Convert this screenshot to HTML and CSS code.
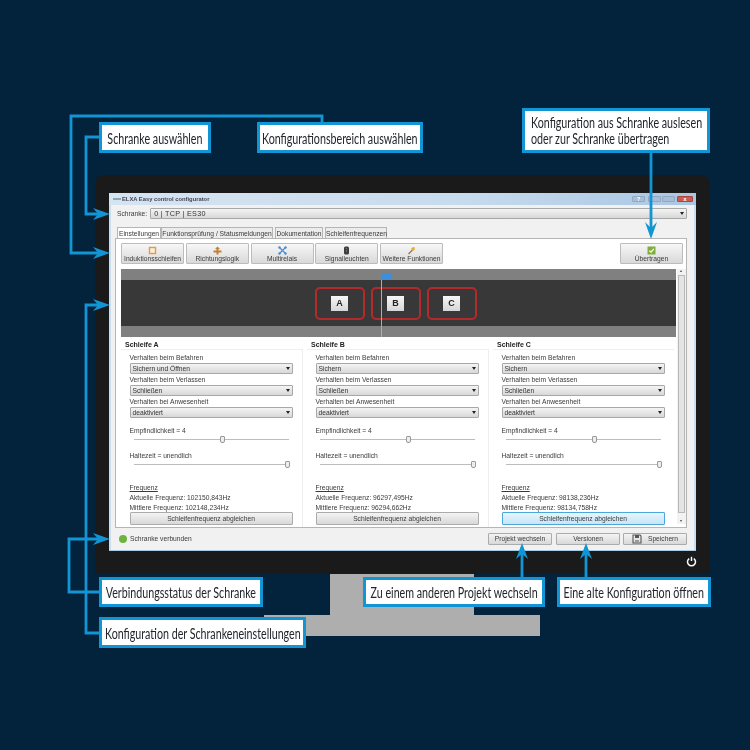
FILE: index.html
```html
<!DOCTYPE html>
<html lang="de">
<head>
    <meta charset="UTF-8">
    <meta name="viewport" content="width=device-width, initial-scale=1.0">
    <title>ELKA Easy control configurator</title>
    <link rel="stylesheet" href="styles.css">
</head>
<body>
<div class="stage">

    <!-- monitor with the application window -->
    <div class="stand"></div>
    <div class="stand-foot"></div>
    <div class="monitor">
        <div class="window">
            <div class="titlebar">
                <span class="app-icon"></span>
                <span class="app-title">ELXA Easy control configurator</span>
                <span class="win-btns">
                    <span class="win-btn win-help">?</span>
                    <span class="win-btn win-min"></span>
                    <span class="win-btn win-max"></span>
                    <span class="win-btn win-close">x</span>
                </span>
            </div>
            <div class="body">
                <div class="device-row">
                    <span>Schranke:</span>
                    <div class="select select-wide">0 | TCP | ES30</div>
                </div>
                <div class="tabs">
                    <span class="tab tab-active">Einstellungen</span>
                    <span class="tab tab-f">Funktionsprüfung / Statusmeldungen</span>
                    <span class="tab tab-d">Dokumentation</span>
                    <span class="tab tab-s">Schleifenfrequenzen</span>
                </div>
                <div class="panel">
                    <div class="toolbar">
                        <div class="tool">
                            <svg width="9" height="9" viewBox="0 0 9 9"><rect x="1.5" y="1.5" width="6" height="6" fill="#fbeeda" stroke="#e39a45" stroke-width="1.4"/></svg>
                            <span>Induktionsschleifen</span>
                        </div>
                        <div class="tool">
                            <svg width="9" height="9" viewBox="0 0 9 9"><path d="M4.5 0.5 7 3H5.5V4.5H8.5V6.5H5.5V8.5H3.5V6.5H0.5V4.5H3.5V3H2z" fill="#bb8238"/></svg>
                            <span>Richtungslogik</span>
                        </div>
                        <div class="tool">
                            <svg width="9" height="9" viewBox="0 0 9 9"><path d="M1 1 8 8M8 1 1 8" stroke="#4e8fd0" stroke-width="1.3"/><circle cx="1.5" cy="1.5" r="1.2" fill="#4e8fd0"/><circle cx="7.5" cy="1.5" r="1.2" fill="#4e8fd0"/><circle cx="1.5" cy="7.5" r="1.2" fill="#4e8fd0"/><circle cx="7.5" cy="7.5" r="1.2" fill="#4e8fd0"/></svg>
                            <span>Multirelais</span>
                        </div>
                        <div class="tool">
                            <svg width="9" height="9" viewBox="0 0 9 9"><rect x="2" y="0.5" width="5" height="8" rx="1.5" fill="#3d3d3d"/><circle cx="4.5" cy="2.5" r="0.8" fill="#777"/><circle cx="4.5" cy="5" r="0.8" fill="#777"/></svg>
                            <span>Signalleuchten</span>
                        </div>
                        <div class="tool">
                            <svg width="9" height="9" viewBox="0 0 9 9"><path d="M1.5 8 5.5 4" stroke="#8a7a4a" stroke-width="1.2"/><path d="M5 1.5 7.5 1 8 3.5 6 5 4 3z" fill="#e8b030"/></svg>
                            <span>Weitere Funktionen</span>
                        </div>
                        <div class="tool tool-send">
                            <svg width="9" height="9" viewBox="0 0 9 9"><rect x="0.5" y="0.5" width="8" height="8" fill="#7fae3c"/><path d="M2.3 4.6 4 6.2 6.8 2.8" fill="none" stroke="#fff" stroke-width="1.2"/></svg>
                            <span>Übertragen</span>
                        </div>
                    </div>
                    <div class="content">
                        <div class="content-main">
                            <div class="lane">
                                <div class="lane-road">
                                    <div class="loop"><span class="loop-key">A</span></div>
                                    <div class="loop"><span class="loop-key">B</span></div>
                                    <div class="loop"><span class="loop-key">C</span></div>
                                </div>
                                <span class="lane-line"></span>
                                <span class="lane-handle"></span>
                            </div>
                            <div class="loops">
                                <section class="group">
                                    <h3>Schleife A</h3>
                                    <div class="group-box">
                                        <p class="lbl">Verhalten beim Befahren</p>
                                        <div class="select">Sichern und Öffnen</div>
                                        <p class="lbl">Verhalten beim Verlassen</p>
                                        <div class="select">Schließen</div>
                                        <p class="lbl">Verhalten bei Anwesenheit</p>
                                        <div class="select">deaktiviert</div>
                                        <p class="lbl lbl-slider">Empfindlichkeit = 4</p>
                                        <div class="slider"><span class="knob knob-mid"></span></div>
                                        <p class="lbl lbl-slider lbl-slider-next">Haltezeit = unendlich</p>
                                        <div class="slider"><span class="knob knob-end"></span></div>
                                        <p class="lbl lbl-freq"><u>Frequenz</u></p>
                                        <p class="lbl lbl-tight">Aktuelle Frequenz: 102150,843Hz</p>
                                        <p class="lbl lbl-tight">Mittlere Frequenz: 102148,234Hz</p>
                                        <div class="btn">Schleifenfrequenz abgleichen</div>
                                    </div>
                                </section>
                                <section class="group">
                                    <h3>Schleife B</h3>
                                    <div class="group-box">
                                        <p class="lbl">Verhalten beim Befahren</p>
                                        <div class="select">Sichern</div>
                                        <p class="lbl">Verhalten beim Verlassen</p>
                                        <div class="select">Schließen</div>
                                        <p class="lbl">Verhalten bei Anwesenheit</p>
                                        <div class="select">deaktiviert</div>
                                        <p class="lbl lbl-slider">Empfindlichkeit = 4</p>
                                        <div class="slider"><span class="knob knob-mid"></span></div>
                                        <p class="lbl lbl-slider lbl-slider-next">Haltezeit = unendlich</p>
                                        <div class="slider"><span class="knob knob-end"></span></div>
                                        <p class="lbl lbl-freq"><u>Frequenz</u></p>
                                        <p class="lbl lbl-tight">Aktuelle Frequenz: 96297,495Hz</p>
                                        <p class="lbl lbl-tight">Mittlere Frequenz: 96294,662Hz</p>
                                        <div class="btn">Schleifenfrequenz abgleichen</div>
                                    </div>
                                </section>
                                <section class="group">
                                    <h3>Schleife C</h3>
                                    <div class="group-box">
                                        <p class="lbl">Verhalten beim Befahren</p>
                                        <div class="select">Sichern</div>
                                        <p class="lbl">Verhalten beim Verlassen</p>
                                        <div class="select">Schließen</div>
                                        <p class="lbl">Verhalten bei Anwesenheit</p>
                                        <div class="select">deaktiviert</div>
                                        <p class="lbl lbl-slider">Empfindlichkeit = 4</p>
                                        <div class="slider"><span class="knob knob-mid"></span></div>
                                        <p class="lbl lbl-slider lbl-slider-next">Haltezeit = unendlich</p>
                                        <div class="slider"><span class="knob knob-end"></span></div>
                                        <p class="lbl lbl-freq"><u>Frequenz</u></p>
                                        <p class="lbl lbl-tight">Aktuelle Frequenz: 98138,236Hz</p>
                                        <p class="lbl lbl-tight">Mittlere Frequenz: 98134,758Hz</p>
                                        <div class="btn btn-focus">Schleifenfrequenz abgleichen</div>
                                    </div>
                                </section>
                            </div>
                        </div>
                        <div class="scrollbar">
                            <span class="scroll-up"></span>
                            <span class="scroll-thumb"></span>
                            <span class="scroll-down"></span>
                        </div>
                    </div>
                </div>
                <div class="statusbar">
                    <span class="led"></span>
                    <span class="status-text">Schranke verbunden</span>
                    <div class="btn btn-foot">Projekt wechseln</div>
                    <div class="btn btn-foot">Versionen</div>
                    <div class="btn btn-foot btn-save">
                        <svg width="10" height="10" viewBox="0 0 10 10"><path d="M1 1H8L9 2V9H1z" fill="none" stroke="#555" stroke-width="1.1"/><rect x="3" y="1" width="4" height="3" fill="#555"/><rect x="3" y="6" width="4" height="3" fill="#999"/></svg>
                        <span>Speichern</span>
                    </div>
                </div>
            </div>
        </div>
        <svg class="power" width="11" height="11" viewBox="0 0 11 11"><path d="M3.2 2.6a4 4 0 1 0 4.6 0" fill="none" stroke="#fff" stroke-width="1.5"/><path d="M5.5 0.8V5" stroke="#fff" stroke-width="1.5"/></svg>
    </div>

    <!-- leader lines -->
    <svg class="leaders" width="750" height="750" viewBox="0 0 750 750">
        <g fill="none" stroke="#1295d4" stroke-width="2.8">
            <path d="M322 122V116H71V253H104"/>
            <path d="M99 137H86V214H104"/>
            <path d="M99 592H69V539H104"/>
            <path d="M99 633H86V305H104"/>
            <path d="M651 153V232"/>
            <path d="M522 577V548"/>
            <path d="M586 577V548"/>
        </g>
        <g fill="#1295d4">
            <path d="M110 253 93 247 98 253 93 259z"/>
            <path d="M110 214 93 208 98 214 93 220z"/>
            <path d="M110 539 93 533 98 539 93 545z"/>
            <path d="M110 305 93 299 98 305 93 311z"/>
            <path d="M651 239 645 222 651 228 657 222z"/>
            <path d="M522 543 516 559 522 554 528 559z"/>
            <path d="M586 543 580 559 586 554 592 559z"/>
        </g>
    </svg>

    <!-- callouts -->
    <div class="note note-device"><span class="note-text">Schranke auswählen</span></div>
    <div class="note note-area"><span class="note-text">Konfigurationsbereich auswählen</span></div>
    <div class="note note-read"><span class="note-text">Konfiguration aus Schranke auslesen<br>oder zur Schranke übertragen</span></div>
    <div class="note note-status"><span class="note-text">Verbindungsstatus der Schranke</span></div>
    <div class="note note-config"><span class="note-text">Konfiguration der Schrankeneinstellungen</span></div>
    <div class="note note-project"><span class="note-text">Zu einem anderen Projekt wechseln</span></div>
    <div class="note note-version"><span class="note-text">Eine alte Konfiguration öffnen</span></div>
</div>
</body>
</html>
```

FILE: styles.css
```css
* {
    box-sizing: border-box;
}

body {
    margin: 0;
    background: #02233b;
}

.stage {
    position: relative;
    width: 750px;
    height: 750px;
    overflow: hidden;
    background: #02233b;
    font-family: 'Liberation Sans', sans-serif;
}

/* monitor */
.monitor {
    position: absolute;
    left: 95px;
    top: 175px;
    width: 615px;
    height: 399px;
    padding: 18px 14px 23px 14px;
    background: #1a1a1a;
    border-radius: 9px 9px 0 0;
}

.stand {
    position: absolute;
    left: 330px;
    top: 574px;
    width: 144px;
    height: 45px;
    background: #aeaeae;
}

.stand-foot {
    position: absolute;
    left: 264px;
    top: 615px;
    width: 276px;
    height: 21px;
    background: #aeaeae;
}

.power {
    position: absolute;
    left: 591px;
    top: 381px;
}

/* application window */
.window {
    display: flex;
    flex-direction: column;
    height: 100%;
    border-bottom: 1px solid #a9cbe6;
    background: #c9dff1;
    color: #3a3a3a;
    font-family: 'Liberation Sans', sans-serif;
    font-size: 6.7px;
    line-height: 9px;
    filter: blur(0.35px);
}

.titlebar {
    display: flex;
    align-items: center;
    flex: none;
    height: 12px;
    padding: 0 3px 0 4px;
    background: linear-gradient(90deg, #d6e4f1, #c7dbee 60%, #a9c6e3);
}

.app-icon {
    width: 8px;
    height: 2px;
    margin-right: 1px;
    background: #8fa5b8;
}

.app-title {
    color: #445;
    font-size: 5.8px;
    font-weight: 700;
}

.win-btns {
    display: flex;
    gap: 1px;
    margin-left: auto;
}

.win-btn {
    display: block;
    width: 13px;
    height: 6px;
    background: #a9bdd4;
    border: 1px solid #90a8c4;
    border-radius: 1px;
    color: #fff;
    font-size: 6px;
    font-weight: 700;
    line-height: 4px;
    text-align: center;
}

.win-help {
    margin-right: 2px;
}

.win-close {
    width: 16px;
    margin-left: 1px;
    background: #cc5a4e;
    border-color: #a8463c;
}

.body {
    display: flex;
    flex-direction: column;
    flex: 1;
    min-height: 0;
    margin: 0 2px 0 2px;
    padding: 3px 7px 0 4px;
    background: #f1f1f1;
}

.device-row {
    display: flex;
    align-items: center;
    gap: 3px;
    height: 11px;
    padding-left: 2px;
}

.select {
    position: relative;
    height: 11px;
    padding-left: 2px;
    border: 1px solid #a8a8a8;
    border-radius: 1px;
    background: linear-gradient(#f4f4f4, #d8d8d8);
    color: #333;
    line-height: 9px;
}

.select::after {
    content: "";
    position: absolute;
    right: 2px;
    top: 3px;
    border: 2px solid transparent;
    border-top: 3px solid #222;
    border-bottom: 0;
}

.select-wide {
    flex: 1;
    padding-left: 3px;
    font-size: 7.2px;
    letter-spacing: 0.3px;
}

.tabs {
    display: flex;
    align-items: flex-end;
    gap: 2px;
    height: 11px;
    margin-top: 8px;
    padding-left: 2px;
}

.tab {
    height: 11px;
    padding-top: 1px;
    border: 1px solid #b5b5b5;
    border-bottom: 0;
    background: #ececec;
    text-align: center;
    white-space: nowrap;
}

.tab-active {
    width: 44px;
    margin-right: -2px;
    background: #fff;
}

.tab-f {
    width: 112px;
}

.tab-d {
    width: 48px;
}

.tab-s {
    width: 62px;
}

.panel {
    display: flex;
    flex-direction: column;
    flex: 1;
    min-height: 0;
    padding: 4px 0 3px 5px;
    border: 1px solid #b5b5b5;
    background: #fff;
}

.toolbar {
    display: flex;
    gap: 1.75px;
    flex: none;
    height: 21px;
}

.tool {
    display: flex;
    flex-direction: column;
    align-items: center;
    width: 63px;
    padding-top: 2px;
    border: 1px solid #bcbcbc;
    border-radius: 1px;
    background: linear-gradient(#f7f7f7, #d9d9d9);
    line-height: 8px;
    white-space: nowrap;
}

.tool-send {
    margin-left: auto;
    margin-right: 3px;
}

.content {
    display: flex;
    flex: 1;
    gap: 1px;
    min-height: 0;
    margin-top: 5px;
}

.content-main {
    flex: 1;
    min-width: 0;
}

/* lane picture */
.lane {
    position: relative;
    height: 68px;
    padding: 11px 0;
    background: #808080;
}

.lane-road {
    display: flex;
    justify-content: center;
    align-items: center;
    gap: 6px;
    height: 46px;
    padding-right: 6px;
    background: #383838;
}

.loop {
    display: flex;
    align-items: center;
    justify-content: center;
    width: 50px;
    height: 33px;
    border: 2px solid #b32a2c;
    border-radius: 5px;
}

.loop-key {
    width: 17px;
    height: 15px;
    background: linear-gradient(#f6f6f6, #d6d6d6);
    color: #222;
    font-family: 'Liberation Sans', sans-serif;
    font-size: 9px;
    font-weight: 700;
    line-height: 15px;
    text-align: center;
}

.lane-line {
    position: absolute;
    left: 260px;
    top: 11px;
    width: 1px;
    height: 57px;
    background: #9fb0c0;
}

.lane-handle {
    position: absolute;
    left: 261px;
    top: 4px;
    width: 9px;
    height: 7px;
    background: #3d8fdc;
}

/* the three loop groups */
.loops {
    display: grid;
    grid-template-columns: 186px 186px 1fr;
    margin-top: 3px;
}

.group h3 {
    margin: 0 0 0 4px;
    color: #222;
    font-size: 7px;
    font-weight: 700;
    line-height: 9px;
}

.group-box {
    height: 178px;
    margin-right: 4px;
    padding: 0 9.5px 0 8.5px;
    border-top: 1px solid #eee;
    border-right: 1px solid #eee;
}

.group:last-child .group-box {
    margin-right: 2px;
    border-right: 0;
}

.lbl {
    margin: 0;
    height: 11px;
    line-height: 11px;
    white-space: nowrap;
}

.group-box .lbl:first-child {
    margin-top: 2px;
}

.lbl-slider {
    margin-top: 7px;
}

.lbl-slider-next {
    margin-top: 10px;
}

.lbl-freq {
    margin-top: 17px;
}

.lbl-tight {
    height: 9.5px;
    line-height: 9.5px;
}

.slider {
    position: relative;
    height: 1px;
    margin: 3px 4px 0 4px;
    background: #bdbdbd;
}

.knob {
    position: absolute;
    top: -3px;
    width: 5px;
    height: 7px;
    border: 1px solid #9a9a9a;
    border-radius: 1px 1px 2px 2px;
    background: #eee;
}

.knob-mid {
    left: 86px;
}

.knob-end {
    right: -1px;
}

.btn {
    height: 13px;
    border: 1px solid #ababab;
    border-radius: 1px;
    background: linear-gradient(#f4f4f4, #d8d8d8);
    line-height: 11px;
    text-align: center;
}

.btn-focus {
    border-color: #4ba6dc;
    background: linear-gradient(#e8f5fc, #c6e5f7);
}

.scrollbar {
    position: relative;
    flex: none;
    width: 9px;
    background: #f2f2f2;
}

.scroll-thumb {
    position: absolute;
    left: 1px;
    right: 1px;
    top: 6px;
    bottom: 11px;
    border: 1px solid #b9b9b9;
    background: #e4e4e4;
}

.scroll-up,
.scroll-down {
    position: absolute;
    left: 3px;
    border: 1.5px solid transparent;
}

.scroll-up {
    top: 1px;
    border-bottom: 2px solid #444;
    border-top: 0;
}

.scroll-down {
    bottom: 2px;
    border-top: 2px solid #444;
    border-bottom: 0;
}

/* status line */
.statusbar {
    display: flex;
    align-items: center;
    flex: none;
    height: 22px;
    padding: 0 0 1px 4px;
}

.led {
    width: 8px;
    height: 8px;
    margin-right: 3px;
    border-radius: 50%;
    background: #6db33f;
}

.status-text {
    margin-right: auto;
}

.btn-foot {
    width: 64px;
    height: 12px;
    margin: 0 0 0 4px;
    line-height: 10px;
}

.btn-save {
    display: flex;
    align-items: center;
    justify-content: center;
    gap: 6px;
    margin-left: 3px;
}

/* callouts and leader lines */
.leaders {
    position: absolute;
    left: 0;
    top: 0;
}

.note {
    position: absolute;
    display: flex;
    align-items: center;
    justify-content: center;
    height: 30px;
    border: 3px solid #1295d4;
    background: #fff;
    color: #22262b;
    font-family: Lato, 'Liberation Sans', sans-serif;
    font-size: 15.5px;
    white-space: nowrap;
}

/* no narrow face is installed, so the text is squeezed */
.note-text {
    flex: none;
    transform: scaleX(0.69);
}

.note-device {
    left: 99px;
    top: 122px;
    width: 112px;
    height: 31px;
}

.note-area {
    left: 257px;
    top: 122px;
    width: 166px;
    height: 31px;
}

.note-read {
    left: 522px;
    top: 108px;
    width: 188px;
    height: 45px;
    justify-content: flex-start;
    padding-left: 6px;
    line-height: 15.5px;
}

.note-read .note-text {
    transform-origin: left center;
}

.note-status {
    left: 99px;
    top: 577px;
    width: 164px;
}

.note-config {
    left: 99px;
    top: 617px;
    width: 207px;
    height: 31px;
}

.note-project {
    left: 363px;
    top: 577px;
    width: 182px;
}

.note-version {
    left: 557px;
    top: 577px;
    width: 154px;
}
```
